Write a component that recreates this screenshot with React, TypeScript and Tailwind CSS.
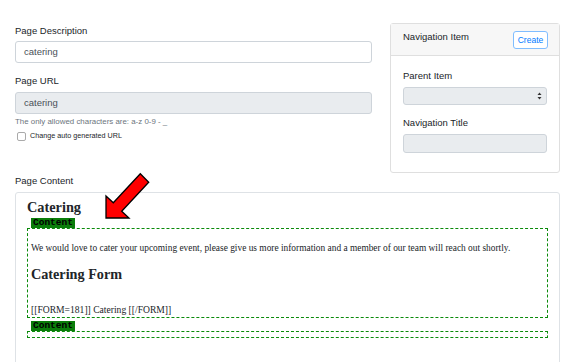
import React from "react";

const sans = { fontFamily: '"Liberation Sans", Arial, sans-serif' };

function Badge() {
  return (
    <div className="flex">
      <span
        className="ml-[4px] flex h-[10px] items-center bg-[#0a7d0a] px-[2px] text-[9.5px] font-bold leading-[10px] text-black"
        style={{ fontFamily: '"Liberation Mono", monospace' }}
      >
        Content
      </span>
    </div>
  );
}

export default function App() {
  return (
    <div
      className="relative h-[362px] w-[580px] overflow-hidden bg-white text-[#212529]"
      style={sans}
    >
      <div className="flex gap-[18px] pl-[15px] pt-[23px]">
        {/* Left column */}
        <div className="flex w-[357px] flex-col pt-[1px]">
          <label className="text-[9.5px] leading-[13px]">Page Description</label>
          <div className="mt-[4px] flex h-[22px] items-center rounded-[3px] border border-[#ced4da] bg-white px-[8px] text-[9.5px] text-[#495057]">
            catering
          </div>
          <label className="mt-[11px] text-[9.5px] leading-[13px]">Page URL</label>
          <div className="mt-[5px] flex h-[22px] items-center rounded-[3px] border border-[#ced4da] bg-[#e9ecef] px-[8px] text-[9.5px] text-[#495057]">
            catering
          </div>
          <div className="mt-[3px] text-[7.9px] leading-[10px] text-[#6c757d]">
            The only allowed characters are: a-z 0-9 - _
          </div>
          <div className="mt-[4px] flex items-center gap-[4px] pl-[2px]">
            <span className="h-[9px] w-[9px] rounded-[2px] border border-[#aaa] bg-white" />
            <span className="text-[7.2px] leading-[10px]">Change auto generated URL</span>
          </div>
        </div>

        {/* Right card */}
        <div className="flex h-[150px] w-[170px] flex-col rounded-[3px] border border-[#dfdfdf]">
          <div className="flex h-[32px] items-center justify-between border-b border-[#dfdfdf] bg-[#f7f7f7] pl-[12px] pr-[11px]">
            <span className="-mt-[4px] text-[9.5px]">Navigation Item</span>
            <span className="mt-[1px] flex h-[18px] w-[35px] items-center justify-center rounded-[3px] border border-[#80bdff] bg-white text-[8.5px] text-[#007bff]">
              Create
            </span>
          </div>
          <div className="flex flex-col px-[12px] pt-[13px]">
            <label className="text-[9.5px] leading-[13px]">Parent Item</label>
            <div className="mt-[5px] flex h-[18px] items-center justify-end rounded-[3px] border border-[#ced4da] bg-[#e9ecef] pr-[4px]">
              <svg width="5" height="8" viewBox="0 0 5 8">
                <path d="M2.5 0.5 L4.5 3 L0.5 3 Z" fill="#333" />
                <path d="M2.5 7.5 L4.5 5 L0.5 5 Z" fill="#333" />
              </svg>
            </div>
            <label className="mt-[11px] text-[9.5px] leading-[13px]">Navigation Title</label>
            <div className="mt-[5px] h-[19px] rounded-[3px] border border-[#ced4da] bg-[#e9ecef]" />
          </div>
        </div>
      </div>

      <div className="pl-[15px] pr-[20px]">
        <label className="mt-[1px] block text-[9.5px] leading-[13px]">Page Content</label>
        <div
          className="mt-[5px] h-[200px] rounded-[3px] border border-[#dee2e6] px-[11px] pt-[5px]"
          style={{ fontFamily: '"Liberation Serif", "Times New Roman", serif' }}
        >
          <div className="mb-[2px] text-[14.3px] font-bold leading-[18px]">Catering</div>
          <Badge />
          <div className="border border-dashed border-[#0a8a0a] px-[3px] pt-[13px] pb-[1px]">
            <p className="text-[9.4px] leading-[12px]">
              We would love to cater your upcoming event, please give us more information and a member of our team will reach out shortly.
            </p>
            <div className="mt-[11px] text-[14.2px] font-bold leading-[18px]">Catering Form</div>
            <p className="mt-[21px] text-[9.6px] leading-[12px]">[[FORM=181]] Catering [[/FORM]]</p>
          </div>
          <div className="mt-[3px]">
            <Badge />
          </div>
          <div className="h-[7px] border border-dashed border-[#0a8a0a]" />
        </div>
      </div>

      {/* Red arrow overlay */}
      <svg className="absolute left-0 top-0" width="580" height="362" viewBox="0 0 580 362">
        <polygon
          points="106,218 106,196 113.3,202.8 140.3,173.8 148.7,182.2 121.7,211.2 129,218"
          fill="#ff0000"
          stroke="#000"
          strokeWidth="1.3"
          strokeLinejoin="miter"
        />
      </svg>
    </div>
  );
}
